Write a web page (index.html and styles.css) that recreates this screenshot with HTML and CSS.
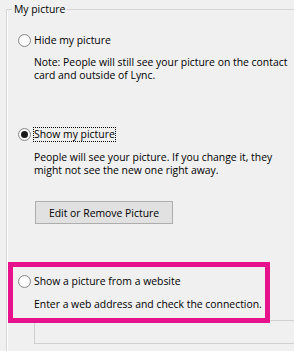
FILE: index.html
```html
<!DOCTYPE html>
<html>
<head>
<meta charset="utf-8">
<link rel="stylesheet" href="styles.css">
</head>
<body>
<div class="page">
  <fieldset class="group">
    <legend class="legend">My picture</legend>
    <div class="row row-first">
      <span class="radio"></span>
      <span class="label">Hide my picture</span>
    </div>
    <p class="desc desc-note">Note: People will still see your picture on the contact<br>card and outside of Lync.</p>
    <div class="row row-show">
      <span class="radio checked"></span>
      <span class="label focus">Show my picture</span>
    </div>
    <p class="desc desc-show">People will see your picture. If you change it, they<br>might not see the new one right away.</p>
    <button class="btn" type="button">Edit or Remove Picture</button>
    <div class="row row-web">
      <span class="radio"></span>
      <span class="label">Show a picture from a website</span>
    </div>
    <p class="desc desc-web">Enter a web address and check the connection.</p>
    <div class="textbox"></div>
  </fieldset>
  <div class="highlight"></div>
</div>
</body>
</html>
```
FILE: styles.css
```css
html, body {
  margin: 0;
  padding: 0;
  background: #f0f0f0;
  overflow: hidden;
}
.page {
  position: relative;
  width: 294px;
  height: 351px;
  overflow: hidden;
  font-family: "Open Sans", "Noto Sans", sans-serif;
  font-size: 10.4px;
  line-height: 13px;
  color: #000;
}
.group {
  margin: 3px 0 0 6px;
  padding: 0 0 40px 0;
  width: 320px;
  border: 1px solid #d5d5d5;
  border-right: none;
  box-shadow: inset 1px 0 0 #fff;
  min-inline-size: 0;
}
.legend {
  margin-left: 5px;
  padding: 0 2px;
  line-height: 13px;
}
.row {
  display: flex;
  align-items: center;
  height: 14px;
  margin-left: 11px;
  gap: 3px;
}
.row-first { margin-top: 17px; }
.row-show { margin-top: 45px; }
.row-web { margin-top: 50px; }
.radio {
  width: 13px;
  height: 13px;
  box-sizing: border-box;
  border: 1px solid #8a8a8a;
  border-radius: 50%;
  background: radial-gradient(circle at 50% 50%, #ffffff 0%, #fafafa 55%, #e4e4e4 100%);
  display: flex;
  align-items: center;
  justify-content: center;
  flex: none;
}
.radio.checked::after {
  content: "";
  width: 7px;
  height: 7px;
  border-radius: 50%;
  background: #1a1a1a;
}
.label { white-space: nowrap; }
.focus {
  outline: 1px dotted #000;
  outline-offset: 0;
}
.desc {
  margin: 0 0 0 27px;
  white-space: nowrap;
}
.desc-note { margin-top: 9px; }
.desc-show { margin-top: 10px; }
.desc-web { margin-top: 10px; }
.btn {
  display: block;
  margin: 24px 0 0 28px;
  width: 138px;
  height: 23px;
  padding: 0;
  background: #e1e1e1;
  border: 1px solid #adadad;
  border-radius: 0;
  font-family: inherit;
  font-size: inherit;
  color: #000;
}
.textbox {
  margin: 9px 0 0 27px;
  height: 24px;
  box-sizing: border-box;
  border: 1px solid #d0d0d0;
  background: #f0f0f0;
}
.highlight {
  position: absolute;
  left: 8px;
  top: 262px;
  width: 262px;
  height: 61px;
  box-sizing: border-box;
  border: 5px solid #e8118c;
}
```
